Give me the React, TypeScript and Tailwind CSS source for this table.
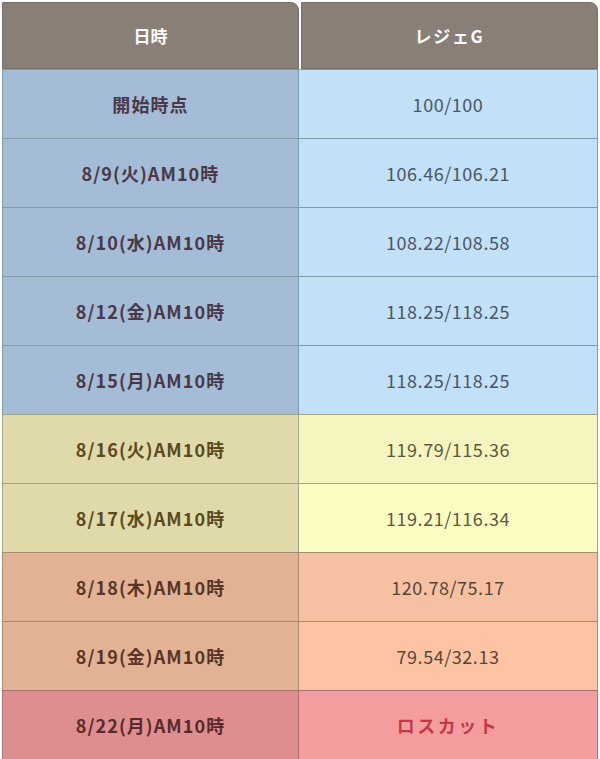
const rows = [
  { date: '開始時点', value: '100/100', l: 'bg-[#a4bcd6]', r: 'bg-[#c2e0f8]', lt: 'text-[#4a3848]', rt: 'text-[#4a5663]', b: 'border-[#7d9ea6]' },
  { date: '8/9(火)AM10時', value: '106.46/106.21', l: 'bg-[#a4bcd6]', r: 'bg-[#c2e0f8]', lt: 'text-[#4a3848]', rt: 'text-[#4a5663]', b: 'border-[#7d9ea6]' },
  { date: '8/10(水)AM10時', value: '108.22/108.58', l: 'bg-[#a4bcd6]', r: 'bg-[#c2e0f8]', lt: 'text-[#4a3848]', rt: 'text-[#4a5663]', b: 'border-[#7d9ea6]' },
  { date: '8/12(金)AM10時', value: '118.25/118.25', l: 'bg-[#a4bcd6]', r: 'bg-[#c2e0f8]', lt: 'text-[#4a3848]', rt: 'text-[#4a5663]', b: 'border-[#7d9ea6]' },
  { date: '8/15(月)AM10時', value: '118.25/118.25', l: 'bg-[#a4bcd6]', r: 'bg-[#c2e0f8]', lt: 'text-[#4a3848]', rt: 'text-[#4a5663]', b: 'border-[#7d9ea6]' },
  { date: '8/16(火)AM10時', value: '119.79/115.36', l: 'bg-[#e0d9a9]', r: 'bg-[#f6f4bf]', lt: 'text-[#5a4a1c]', rt: 'text-[#5c5a40]', b: 'border-[#a3a385]' },
  { date: '8/17(水)AM10時', value: '119.21/116.34', l: 'bg-[#e0d9a9]', r: 'bg-[#fdfcc2]', lt: 'text-[#5a4a1c]', rt: 'text-[#5c5a40]', b: 'border-[#a3a385]' },
  { date: '8/18(木)AM10時', value: '120.78/75.17', l: 'bg-[#e1b394]', r: 'bg-[#f6c1a2]', lt: 'text-[#5a3526]', rt: 'text-[#5a4438]', b: 'border-[#a98a6e]' },
  { date: '8/19(金)AM10時', value: '79.54/32.13', l: 'bg-[#e1b394]', r: 'bg-[#fcc4a3]', lt: 'text-[#5a3526]', rt: 'text-[#5a4438]', b: 'border-[#a98a6e]' },
  { date: '8/22(月)AM10時', value: 'ロスカット', l: 'bg-[#de8e8f]', r: 'bg-[#f49d9f]', lt: 'text-[#5a2a2a]', rt: 'text-[#c03a48] font-bold tracking-[0.14em]', b: 'border-[#a87272]' },
];

export default function App() {
  return (
    <div className="w-[600px] h-[759px] bg-white overflow-hidden px-[2px] pt-[2px] font-['Meiryo','Noto_Sans_CJK_JP',sans-serif]">
      <div className="flex h-[67px] gap-[2px]">
        <div className="flex-1 flex items-center justify-center bg-[#8a7f77] border border-[#7a6f68] rounded-tr-[8px] text-white font-bold text-[17px]">
          日時
        </div>
        <div className="flex-1 flex items-center justify-center bg-[#8a7f77] border border-[#7a6f68] rounded-tr-[8px] text-white font-bold text-[17px] tracking-[0.1em]">
          レジェG
        </div>
      </div>
      {rows.map((row, i) => (
        <div key={i} className={`flex h-[69px] border-t ${row.b}`}>
          <div className={`w-[297px] flex items-center justify-center border-l border-r ${row.b} ${row.l} ${row.lt} font-bold text-[18px] tracking-[0.06em]`}>
            {row.date}
          </div>
          <div className={`flex-1 flex items-center justify-center border-r ${row.b} ${row.r} ${row.rt} text-[18px] tracking-[0.03em]`}>
            {row.value}
          </div>
        </div>
      ))}
    </div>
  );
}
